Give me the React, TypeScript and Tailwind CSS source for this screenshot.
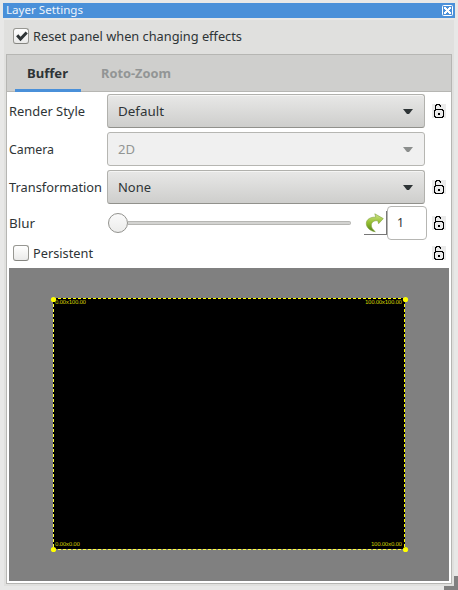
import React from "react";

const FONT = "font-['Noto_Sans','Open_Sans',sans-serif]";

function Label({ text, width, className = "" }: { text: string; width: number; className?: string }) {
  return (
    <svg width={width} height="20" className={`block shrink-0 overflow-visible ${className}`}>
      <text x="0" y="15" textLength={width} lengthAdjust="spacingAndGlyphs" fill="currentColor">{text}</text>
    </svg>
  );
}

function Lock() {
  return (
    <svg width="14" height="14" className="block shrink-0 bg-[#ebebeb]" shapeRendering="crispEdges">
      <path
        d="M4 0h4v1h-4zM3 1h1v4h-1zM8 1h1v2h-1zM3 5h8v1h-8zM2 6h1v7h-1zM11 6h1v7h-1zM3 13h8v1h-8zM6 9h2v2h-2z"
        fill="#000"
      />
      <path d="M3 6h1v1h-1zM10 6h1v1h-1zM3 12h1v1h-1zM10 12h1v1h-1zM4 1h1v1h-1zM7 1h1v1h-1z" fill="#222" />
    </svg>
  );
}

function Combo({ text, width, disabled = false }: { text: string; width: number; disabled?: boolean }) {
  return (
    <div
      className={`flex h-[34px] w-[318px] items-center justify-between rounded-[3px] border pl-[10px] pr-[11px] ${
        disabled
          ? "border-[#b6b6b2] bg-[#f0f0f0] text-[#929594]"
          : "border-[#b1b1ad] border-b-[#91918c] bg-linear-to-b from-[#e8e8e7] to-[#cececc] text-[#2e3436] shadow-[inset_0_1px_0_#f5f5f4]"
      }`}
    >
      <Label text={text} width={width} />
      <svg width="10" height="5" className="block">
        <path d="M0 0h10L6 5H4z" fill={disabled ? "#8b8e8d" : "#2e3436"} />
      </svg>
    </div>
  );
}

function Check({ checked = false }: { checked?: boolean }) {
  return (
    <div className="h-4 w-4 shrink-0 rounded-[3px] border border-[#979792] border-b-[#858580] bg-linear-to-b from-white to-[#eaeae9]">
      {checked && (
        <svg width="14" height="14" className="block">
          <path d="M3.2 6.300l3.300 3.700L12.700 3.500" fill="none" stroke="#2e3436" strokeWidth="3" />
        </svg>
      )}
    </div>
  );
}

export default function App() {
  return (
    <div className={`relative h-[590px] w-[458px] overflow-hidden bg-[#e8e8e7] pl-[3px] pt-[3px] text-[13px] text-[#2e3436] ${FONT}`}>
      <div className="flex h-[15px] w-[452px] items-center justify-between bg-[#4a90d9] pl-[3px] pr-[2px] text-[11px] text-[#eef4fb]">
        <Label text="Layer Settings" width={77} className="-mt-[3px]" />
        <svg width="11" height="11" className="block">
          <rect x="0.500" y="0.500" width="10" height="10" rx="1" fill="none" stroke="#fff" />
          <path d="M2 2h2v1h3v-1h2v2h-1v3h1v2h-2v-1h-3v1h-2v-2h1v-3h-1z" fill="#fff" shapeRendering="crispEdges" />
          <path d="M5 3h1v1h-1zM5 7h1v1h-1zM3 5h1v1h-1zM7 5h1v1h-1z" fill="#4a90d9" shapeRendering="crispEdges" />
        </svg>
      </div>

      <div className="ml-px mt-[2px] h-[566px] w-[450px] bg-[#e0e0de] px-[2px]">
        <div className="flex h-[34px] items-start gap-1 pl-[7px] pt-2">
          <Check checked />
          <Label text="Reset panel when changing effects" width={209} className="-mt-[2px]" />
        </div>

        <div className="h-[530px] w-[446px] border border-[#b6b6b3] bg-white">
          <div className="flex h-[37px] gap-2 border-b border-[#b6b6b3] bg-[#cfcfcd] pl-2 font-bold">
            <div className="h-[37px] w-[66px] border-b-[3px] border-[#4a90d9] pl-3 pt-[8px]">
              <Label text="Buffer" width={41} />
            </div>
            <div className="pl-3 pt-[8px] text-[#929595]">
              <Label text="Roto-Zoom" width={70} />
            </div>
          </div>

          <div className="pl-[2px]">
            <div className="mt-[2px] flex flex-col gap-1">
              <div className="flex items-center">
                <div className="w-[98px]"><Label text="Render Style" width={76} /></div>
                <Combo text="Default" width={46} />
                <div className="ml-[7px]"><Lock /></div>
              </div>
              <div className="flex items-center">
                <div className="w-[98px]"><Label text="Camera" width={45} /></div>
                <Combo text="2D" width={17} disabled />
              </div>
              <div className="flex items-center">
                <div className="w-[98px]"><Label text="Transformation" width={93} /></div>
                <Combo text="None" width={33} />
                <div className="ml-[7px]"><Lock /></div>
              </div>
            </div>

            <div className="mt-[2px] flex h-[34px] items-center">
              <div className="w-[98px]"><Label text="Blur" width={26} /></div>
              <div className="flex w-[245px] items-center pl-px">
                <div className="h-5 w-5 shrink-0 rounded-full border border-[#92928e] bg-linear-to-b from-[#fafafa] to-[#ececeb]" />
                <div className="h-1 w-[223px] rounded-r-sm border border-l-0 border-[#b6b6b3] bg-[#d3d3d1]" />
              </div>
              <div className="ml-[12px] h-6 w-[23px] border-b border-r border-[#777] pl-[1px] pt-[2px]">
                <svg width="20" height="21" viewBox="0 0 20 21" className="block">
                  <defs>
                    <linearGradient id="arrow" x1="0" y1="0" x2="0" y2="1">
                      <stop offset="0" stopColor="#d3e68c" />
                      <stop offset="0.500" stopColor="#94bf30" />
                      <stop offset="1" stopColor="#527f19" />
                    </linearGradient>
                  </defs>
                  <path d="M9.800 .8L18.300 5.600L13.600 10.700L12.800 7.800C9 7.200 6.300 9.300 6.300 12C6.300 14.300 7.500 16.500 10.300 18.700C5.500 18.300 1.300 14.700 1.300 10.500C1.300 6.300 5.500 3.800 10.800 4.200z" fill="url(#arrow)" stroke="#7fa13a" strokeWidth=".6" />
                </svg>
              </div>
              <div className="h-[34px] w-10 rounded-[4px] border border-[#b6b6b3] bg-white pl-[9px] pt-[5px]">
                <Label text="1" width={7} />
              </div>
              <div className="ml-[5px]"><Lock /></div>
            </div>

            <div className="flex h-[26px] items-center pl-1">
              <Check />
              <div className="ml-1 w-[399px]"><Label text="Persistent" width={60} /></div>
              <Lock />
            </div>

            <div className="mt-[2px] h-[313px] w-[440px] bg-[#808080]">
              <svg width="440" height="313" className="block">
                <rect x="45" y="30" width="351" height="251" fill="#000" />
                <g fill="none" strokeDasharray="3 2" shapeRendering="crispEdges">
                  <path d="M44 30.500H396M395.500 31V282" stroke="#ff0" />
                  <path d="M44.500 31V282" stroke="#000" strokeDasharray="none" />
                  <path d="M44.500 31V282M44 281.500H396" stroke="#ffff40" />
                </g>
                <g fill="#ff0">
                  <circle cx="44.500" cy="31.500" r="2.600" />
                  <circle cx="396.500" cy="31.500" r="2.600" />
                  <circle cx="44.500" cy="281.500" r="2.600" />
                  <circle cx="396.500" cy="281.500" r="2.600" />
                </g>
                <g fill="#d0d000" fontSize="5.500" fontFamily="DejaVu Sans">
                  <text x="46" y="36" textLength="31">0.00x100.00</text>
                  <text x="356" y="36" textLength="37">100.00x100.00</text>
                  <text x="46" y="278" textLength="25">0.00x0.00</text>
                  <text x="362" y="278" textLength="31">100.00x0.00</text>
                </g>
              </svg>
            </div>
          </div>
        </div>
      </div>
      <div className="absolute bottom-0 right-0 h-1 w-[14px] bg-[#808080]" />
      <div className="absolute bottom-0 right-0 h-[14px] w-1 bg-[#808080]" />
    </div>
  );
}
